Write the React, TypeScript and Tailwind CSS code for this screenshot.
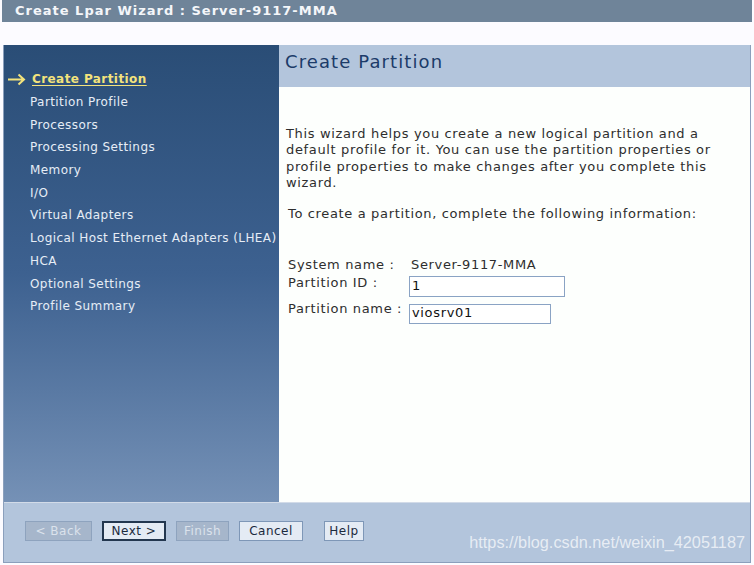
const steps = [
  "Partition Profile",
  "Processors",
  "Processing Settings",
  "Memory",
  "I/O",
  "Virtual Adapters",
  "Logical Host Ethernet Adapters (LHEA)",
  "HCA",
  "Optional Settings",
  "Profile Summary",
];

function WizButton({
  label,
  width,
  disabled,
  focused,
}: {
  label: string;
  width: string;
  disabled?: boolean;
  focused?: boolean;
}) {
  const base = "flex h-[20px] items-center justify-center text-[12px] leading-none tracking-[0.5px]";
  if (disabled) {
    return (
      <div className={`${base} ${width} border border-[#8ea3be] bg-[#a6b6cb] text-[#dbe2ec]`}>
        {label}
      </div>
    );
  }
  return (
    <div
      className={`${base} ${width} bg-[#e4ebf4] text-[#1b2a3d] ${
        focused ? "border-2 border-[#23374f]" : "border border-[#7e97b7]"
      }`}
    >
      {label}
    </div>
  );
}

export default function App() {
  return (
    <div className="relative h-[565px] w-[754px] overflow-hidden bg-[#fcfbff] font-['DejaVu_Sans',sans-serif]">
      <div className="ml-[2px] mr-[2px] flex h-[22px] items-center bg-[#6f8499] pl-[13px] text-[13px] font-bold tracking-[1px] text-[#f4f6f9]">
        Create Lpar Wizard : Server-9117-MMA
      </div>

      <div className="ml-[3px] mr-[3px] mt-[23px] flex flex-col border-b border-l border-r border-[#8b9fbc]">
        <div className="flex h-[457px]">
          <div className="w-[275px] shrink-0 whitespace-nowrap bg-gradient-to-b from-[#2a4d76] via-[#3d6190] to-[#7591b6] pt-[23px] text-[12px] tracking-[0.42px] text-[#e6edf6]">
            <div className="flex h-[22.7px] items-center gap-[6px] pl-[3px]">
              <svg width="19" height="13" viewBox="0 0 19 13">
                <path d="M1 6.5 H17 M11.5 1.5 L17 6.5 L11.5 11.5" fill="none" stroke="#f3e37c" strokeWidth="2" />
              </svg>
              <span className="font-bold text-[#f3e37c] underline underline-offset-2">Create Partition</span>
            </div>
            {steps.map((s) => (
              <div key={s} className="flex h-[22.7px] items-center pl-[26px]">
                {s}
              </div>
            ))}
          </div>

          <div className="flex flex-1 flex-col bg-[#fdfffd]">
            <div className="h-[42px] bg-[#b3c5dc] pl-[6px] pt-[3px] text-[18px] tracking-[1.1px] text-[#1c3b69]">
              Create Partition
            </div>
            <div className="pl-[7px] pr-[10px] pt-[39px] text-[13px] leading-[16.3px] tracking-[0.65px] text-[#2e2e2e]">
              <p>
                This wizard helps you create a new logical partition and a default profile for it. You can use the
                partition properties or profile properties to make changes after you complete this wizard.
              </p>
              <p className="mt-[15px] pl-[2px]">To create a partition, complete the following information:</p>

              <div className="mt-[35px] pl-[2px]">
                <div className="flex">
                  <span className="w-[123px]">System name :</span>
                  <span>Server-9117-MMA</span>
                </div>
                <div className="flex h-[27px]">
                  <span className="w-[121px] pt-[1px]">Partition ID :</span>
                  <div className="mt-[2px] flex h-[21px] w-[156px] items-end border border-[#8aa3c4] bg-white px-[2px] pb-[1px] text-[#111]">
                    1
                  </div>
                </div>
                <div className="flex">
                  <span className="w-[121px]">Partition name :</span>
                  <div className="mt-[3px] flex h-[20px] w-[142px] items-end border border-[#8aa3c4] bg-white px-[2px] pb-[1px] text-[#111]">
                    viosrv01
                  </div>
                </div>
              </div>
            </div>
          </div>
        </div>

        <div className="relative h-[60px] border-t border-[#d2dbe8] bg-[#b3c5dc] pl-[21px] pt-[18px]">
          <div className="flex items-center">
            <WizButton label="< Back" width="w-[67px]" disabled />
            <div className="w-[10px]" />
            <WizButton label="Next >" width="w-[64px]" focused />
            <div className="w-[10px]" />
            <WizButton label="Finish" width="w-[53px]" disabled />
            <div className="w-[10px]" />
            <WizButton label="Cancel" width="w-[64px]" />
            <div className="w-[21px]" />
            <WizButton label="Help" width="w-[40px]" />
          </div>
          <div className="absolute bottom-[8px] right-[5px] font-['Liberation_Sans',sans-serif] text-[16.3px] text-white/70">
            https://blog.csdn.net/weixin_42051187
          </div>
        </div>
      </div>
    </div>
  );
}
